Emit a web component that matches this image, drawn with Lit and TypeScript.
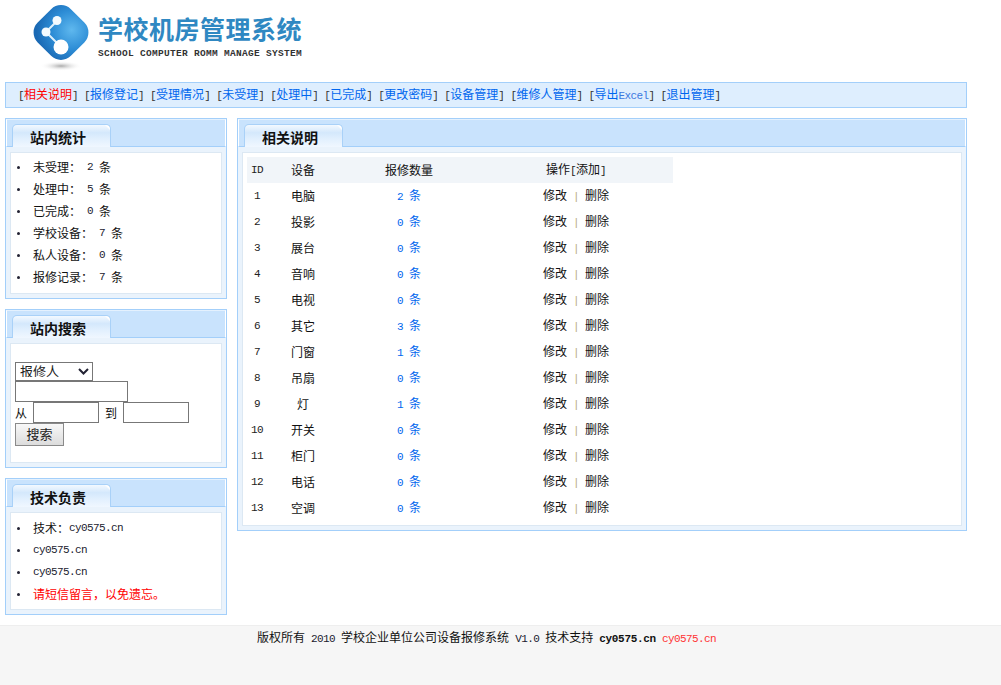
import { LitElement, html, css } from "lit";
import { customElement } from "lit/decorators.js";

const NAV = ["相关说明", "报修登记", "受理情况", "未受理", "处理中", "已完成", "更改密码", "设备管理", "维修人管理", "导出|Excel", "退出管理"];
const STATS: [string, string][] = [["未受理：", "2"], ["处理中：", "5"], ["已完成：", "0"], ["学校设备：", "7"], ["私人设备：", "0"], ["报修记录：", "7"]];
const ROWS: [string, string][] = [["电脑", "2"], ["投影", "0"], ["展台", "0"], ["音响", "0"], ["电视", "0"], ["其它", "3"], ["门窗", "1"], ["吊扇", "0"], ["灯", "1"], ["开关", "0"], ["柜门", "0"], ["电话", "0"], ["空调", "0"]];

@customElement("app-root")
export class AppRoot extends LitElement {
  static styles = css`
    :host { display: block; width: 1001px; height: 685px; overflow: hidden; background: #fff; color: #111;
      font-family: "Noto Sans CJK SC", "Liberation Sans", sans-serif; font-size: 12px; line-height: 16px; }
    * { box-sizing: border-box; }
    .n { font-family: "Liberation Mono", monospace; font-size: 11px; letter-spacing: -.6px; white-space: pre; color: #1a1a2e; }
    .header { height: 82px; display: flex; padding-left: 28px; }
    .logo { width: 70px; height: 76px; flex: none; }
    .brand { padding-top: 11px; }
    .title { font-size: 25px; line-height: 35px; font-weight: 700; letter-spacing: .5px; color: #2f88c2; white-space: nowrap; }
    .sub { font-family: "Liberation Mono", monospace; font-size: 9.500px; line-height: 12px; font-weight: 700; letter-spacing: .3px; color: #333; margin-top: 2px; white-space: nowrap; }
    .nav { margin-left: 5px; width: 962px; height: 26px; border: 1px solid #a3cffa; background: #deeefe; display: flex; align-items: center; gap: 6px; padding-left: 12px; }
    .nav a { color: #0066ee; text-decoration: none; white-space: nowrap; }
    .nav a .n { color: #3b78e0; }
    .nav a.on { color: #f00; }
    .nav .br { color: #333; }
    .main { display: flex; gap: 10px; margin: 10px 0 10px 5px; width: 962px; align-items: flex-start; }
    .side { width: 222px; display: flex; flex-direction: column; gap: 10px; flex: none; }
    .panel { border: 1px solid #a3cffa; background: #eaf3fc; padding: 0 4px 4px; }
    .s1 { height: 181px; } .s2 { height: 159px; } .s3 { height: 137px; }
    .wide { width: 730px; height: 413px; flex: none; }
    .head { margin: 0 -4px; border: 1px solid #fff; border-top-color: #e4f1fe; height: 28px; background: #c9e3fd; display: flex; align-items: flex-end; padding-left: 5px; border-bottom: 1px solid #a3cffa; }
    .tab { width: 99px; height: 23px; margin-bottom: -1px; padding: 2px 0 0 17px; border: 1px solid #a9d1f8; border-bottom: 0; border-radius: 5px 5px 0 0;
      background: linear-gradient(225deg, #fff 3px, transparent 4px), linear-gradient(#f3f9ff 0, #d4e8fc 35%, #e2f0fe 65%, #f0f7ff 100%);
      font-size: 14px; font-weight: 700; line-height: 21px; color: #111; white-space: nowrap; }
    .body { margin-top: 5px; border: 1px solid #dce8f3; background: #fff; }
    .s1 .body { height: 142px; padding: 3px 0 5px; }
    .s2 .body { height: 120px; padding: 18px 0 0 4px; }
    .s3 .body { height: 98px; padding: 4px 0; }
    .wide .body { height: 374px; padding: 4px 0 4px 4px; }
    ul { list-style: none; margin: 0; padding: 0; }
    li { height: 22px; display: flex; align-items: center; padding-left: 22px; position: relative; white-space: nowrap; }
    li::before { content: ""; position: absolute; left: 6px; top: 10px; width: 3px; height: 3px; border-radius: 50%; background: #223; }
    .red { color: #f00; }
    form { display: flex; flex-direction: column; align-items: flex-start; margin: 0; }
    select { appearance: none; width: 78px; height: 19px; border: 1px solid #777; color: #222; font: 13px/15px "Noto Sans CJK SC", sans-serif; padding: 0 0 3px 4px; border-radius: 0;
      background: #fff url("data:image/svg+xml,%3Csvg xmlns='http://www.w3.org/2000/svg' width='11' height='7'%3E%3Cpath d='M1 1l4.500 4.500L10 1' fill='none' stroke='%23223' stroke-width='2'/%3E%3C/svg%3E") no-repeat 62px 5px; }
    input { height: 21px; border: 1px solid #777; background: #fff; padding: 0; border-radius: 0; display: block; }
    .i1 { width: 113px; } .i2 { width: 66px; }
    .range { display: flex; align-items: center; gap: 6px; height: 21px; }
    button { width: 49px; height: 23px; border: 1px solid #8a8a8a; background: linear-gradient(#f8f8f8, #dcdcdc); font: 13px/17px "Noto Sans CJK SC", sans-serif; color: #222; padding: 0 0 2px; border-radius: 0; }
    .table { width: 426px; }
    .row { display: grid; grid-template-columns: 20px 72px 140px 194px; height: 26px; align-items: center; text-align: center; white-space: nowrap; }
    .row.th { background: #f1f5f9; }
    .qty, .qty .n { color: #0066ee; }
    .ops .n { color: #b8aa80; }
    .row.th .n, .row .id { color: #222; }
    .footer { height: 60px; border-top: 1px solid #eee; background: #f6f6f6; padding: 2px 28px 0 0; text-align: center; white-space: nowrap; line-height: 17px; }
    .n.b { font-weight: 700; color: #111; letter-spacing: -.3px; }
    .n.red { color: #f33; }
  `;

  private panel(cls: string, title: string, content: unknown) {
    return html`<section class="panel ${cls}"><div class="head"><div class="tab">${title}</div></div><div class="body">${content}</div></section>`;
  }

  render() {
    return html`
      <div class="header">
        <svg class="logo" viewBox="0 0 70 76" aria-hidden="true">
          <defs>
            <radialGradient id="lg" cx="62%" cy="30%" r="75%"><stop offset="0" stop-color="#5fb8ee"/><stop offset=".55" stop-color="#2d8dd6"/><stop offset="1" stop-color="#1a69b4"/></radialGradient>
            <radialGradient id="sh"><stop offset="0" stop-color="#aaa"/><stop offset="1" stop-color="#fff" stop-opacity="0"/></radialGradient>
          </defs>
          <ellipse cx="33" cy="66" rx="21" ry="5" fill="url(#sh)"/>
          <rect x="-23.500" y="-23.500" width="47" height="47" rx="14" fill="url(#lg)" transform="translate(33 32.5) rotate(45)"/>
          <path d="M29 21 18 32 33 47" fill="none" stroke="#dff0fb" stroke-width="2"/>
          <circle cx="29" cy="20.500" r="4.500" fill="#f4fafe"/>
          <circle cx="18" cy="32" r="4.500" fill="#f4fafe"/>
          <circle cx="33" cy="47" r="7.500" fill="#fff"/>
        </svg>
        <div class="brand">
          <div class="title">学校机房管理系统</div>
          <div class="sub">SCHOOL COMPUTER ROMM MANAGE SYSTEM</div>
        </div>
      </div>
      <nav class="nav">
        ${NAV.map((t, i) => {
          const [a, b] = t.split("|");
          return html`<span><span class="n br">[</span><a class=${i === 0 ? "on" : ""} href="#">${a}${b ? html`<span class="n">${b}</span>` : ""}</a><span class="n br">]</span></span>`;
        })}
      </nav>
      <div class="main">
        <div class="side">
          ${this.panel("s1", "站内统计", html`<ul>${STATS.map(([l, v]) => html`<li>${l}<span class="n"> ${v} </span>条</li>`)}</ul>`)}
          ${this.panel("s2", "站内搜索", html`<form>
            <select><option>报修人</option></select>
            <input class="i1" />
            <div class="range">从<input class="i2" />到<input class="i2" /></div>
            <button type="button">搜索</button>
          </form>`)}
          ${this.panel("s3", "技术负责", html`<ul>
            <li>技术：<span class="n">cy0575.cn</span></li>
            <li><span class="n">cy0575.cn</span></li>
            <li><span class="n">cy0575.cn</span></li>
            <li class="red">请短信留言，以免遗忘。</li>
          </ul>`)}
        </div>
        ${this.panel("wide", "相关说明", html`<div class="table">
          <div class="row th"><span class="n">ID</span><span>设备</span><span>报修数量</span><span>操作<span class="n">[</span>添加<span class="n">]</span></span></div>
          ${ROWS.map(([d, c], i) => html`<div class="row">
            <span class="n id">${i + 1}</span><span>${d}</span>
            <span class="qty"><span class="n">${c} </span>条</span>
            <span class="ops">修改<span class="n"> | </span>删除</span>
          </div>`)}
        </div>`)}
      </div>
      <footer class="footer">版权所有<span class="n"> 2010 </span>学校企业单位公司设备报修系统<span class="n"> V1.0 </span>技术支持<span class="n"> </span><span class="n b">cy0575.cn</span><span class="n"> </span><span class="n red">cy0575.cn</span></footer>
    `;
  }
}
